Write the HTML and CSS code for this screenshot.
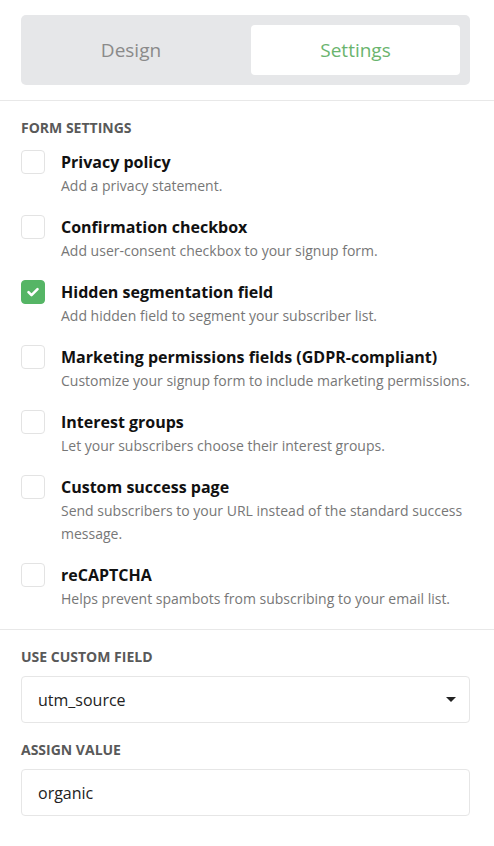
FILE: index.html
```html
<!DOCTYPE html>
<html>
<head>
<meta charset="utf-8">
<link rel="stylesheet" href="styles.css">
</head>
<body>
<div class="page">
  <div class="tabs-wrap">
    <div class="tabs">
      <div class="tab">Design</div>
      <div class="tab active">Settings</div>
    </div>
  </div>
  <section class="section">
    <h2 class="heading">FORM SETTINGS</h2>
    <ul class="options">
      <li class="option">
        <span class="box"></span>
        <div class="text"><div class="title">Privacy policy</div><div class="desc">Add a privacy statement.</div></div>
      </li>
      <li class="option">
        <span class="box"></span>
        <div class="text"><div class="title">Confirmation checkbox</div><div class="desc">Add user-consent checkbox to your signup form.</div></div>
      </li>
      <li class="option">
        <span class="box checked"><svg viewBox="0 0 24 24" width="24" height="24"><path d="M7.5 12.2l3 3 6-6" fill="none" stroke="#fff" stroke-width="2.6" stroke-linecap="round" stroke-linejoin="round"/></svg></span>
        <div class="text"><div class="title">Hidden segmentation field</div><div class="desc">Add hidden field to segment your subscriber list.</div></div>
      </li>
      <li class="option">
        <span class="box"></span>
        <div class="text"><div class="title">Marketing permissions fields (GDPR-compliant)</div><div class="desc">Customize your signup form to include marketing permissions.</div></div>
      </li>
      <li class="option">
        <span class="box"></span>
        <div class="text"><div class="title">Interest groups</div><div class="desc">Let your subscribers choose their interest groups.</div></div>
      </li>
      <li class="option">
        <span class="box"></span>
        <div class="text"><div class="title">Custom success page</div><div class="desc">Send subscribers to your URL instead of the standard success message.</div></div>
      </li>
      <li class="option">
        <span class="box"></span>
        <div class="text"><div class="title">reCAPTCHA</div><div class="desc">Helps prevent spambots from subscribing to your email list.</div></div>
      </li>
    </ul>
  </section>
  <section class="section field-section">
    <h2 class="heading">USE CUSTOM FIELD</h2>
    <div class="control select"><span>utm_source</span><span class="caret"></span></div>
    <h2 class="heading second">ASSIGN VALUE</h2>
    <div class="control">organic</div>
  </section>
</div>
</body>
</html>
```
FILE: styles.css
```css
* { box-sizing: border-box; }
html, body { margin: 0; padding: 0; background: #fff; }
body { font-family: "Open Sans", "Liberation Sans", sans-serif; color: #111; }
.page { width: 494px; }
.tabs-wrap { padding: 15px 24px 15px 21px; border-bottom: 1px solid #e8e8e8; }
.tabs { display: grid; grid-template-columns: 200px 209px; column-gap: 20px; background: #e6e7e9; border-radius: 5px; padding: 10px; height: 70px; }
.tab { display: flex; align-items: center; justify-content: center; font-size: 19px; color: #8a8a8a; border-radius: 4px; }
.tab.active { background: #fff; color: #6ab46e; }
.section { padding: 16px 24px 19px 21px; border-bottom: 1px solid #e8e8e8; }
.heading { margin: 0 0 12px; font-size: 14px; font-weight: 700; color: #595959; line-height: 22px; }
.options { list-style: none; margin: 0 -6px 0 0; padding: 0; }
.option { display: flex; gap: 16px; margin-bottom: 19px; }
.option:last-child { margin-bottom: 0; }
.box { flex: none; width: 24px; height: 24px; border: 1px solid #e3e3e3; border-radius: 4px; margin-top: -1px; display: flex; }
.box.checked { background: #55b565; border-color: #55b565; }
.box svg { margin: -1px; }
.title { font-size: 16px; font-weight: 700; line-height: 22px; color: #111; }
.desc { font-size: 14px; line-height: 23px; padding-top: 1px; color: #777; }
.field-section { border-bottom: none; }
.field-section .heading { margin-bottom: 8px; }
.control { height: 47px; border: 1px solid #e6e6e6; border-radius: 4px; display: flex; align-items: center; padding: 0 13px 0 16px; font-size: 16px; color: #222; }
.select { justify-content: space-between; }
.caret { width: 0; height: 0; border-left: 5px solid transparent; border-right: 5px solid transparent; border-top: 5px solid #222; }
.field-section .heading.second { margin-top: 16px; }
```
